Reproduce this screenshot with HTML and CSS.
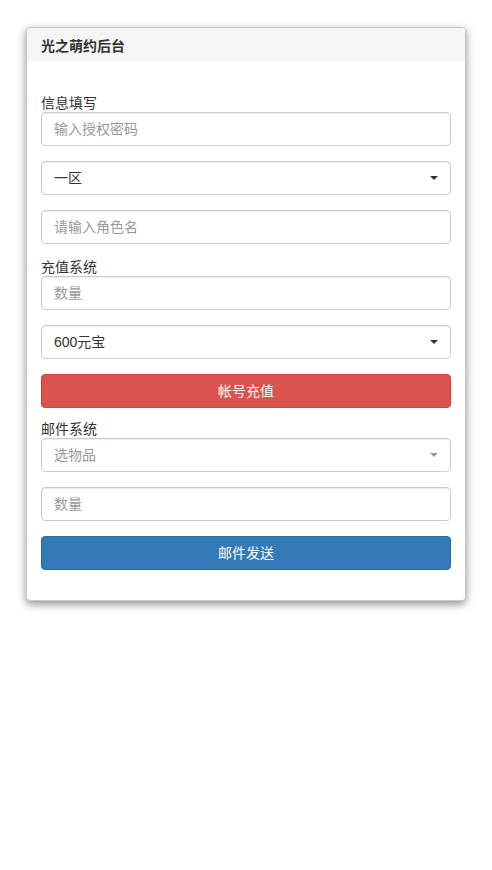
FILE: index.html
```html
<!DOCTYPE html>
<html lang="zh-CN">
<head>
<meta charset="utf-8">
<title>光之萌约后台</title>
<link rel="stylesheet" href="styles.css">
</head>
<body>
<div class="page">
  <div class="card">
    <div class="card-header">光之萌约后台</div>
    <div class="card-body">
      <label class="label">信息填写</label>
      <input class="control" type="text" placeholder="输入授权密码">
      <div class="select-wrap">
        <select class="control select">
          <option>一区</option>
        </select>
      </div>
      <input class="control" type="text" placeholder="请输入角色名">

      <label class="label">充值系统</label>
      <input class="control" type="text" placeholder="数量">
      <div class="select-wrap">
        <select class="control select">
          <option>600元宝</option>
        </select>
      </div>
      <button class="btn btn-danger" type="button">帐号充值</button>

      <label class="label">邮件系统</label>
      <div class="select-wrap muted">
        <select class="control select placeholder">
          <option>选物品</option>
        </select>
      </div>
      <input class="control" type="text" placeholder="数量">
      <button class="btn btn-primary last" type="button">邮件发送</button>
    </div>
  </div>
</div>
</body>
</html>
```
FILE: styles.css
```css
* { box-sizing: border-box; }
html, body {
  margin: 0;
  padding: 0;
  background: #fff;
}
body {
  font-family: "Liberation Sans", "Noto Sans CJK SC", sans-serif;
  font-size: 14px;
  color: #333;
}
.page {
  padding: 27px 26px;
}
.card {
  background: #fff;
  border: 1px solid #c8c8c8;
  border-radius: 4px;
  box-shadow: 0 3px 8px rgba(0, 0, 0, 0.45);
  overflow: hidden;
}
.card-header {
  height: 34px;
  display: flex;
  align-items: center;
  padding: 0 14px;
  background: #f5f5f5;
  font-weight: bold;
  font-size: 14px;
  color: #333;
}
.card-body {
  padding: 33px 14px 15px;
  display: flex;
  flex-direction: column;
}
.label {
  display: block;
  font-size: 14px;
  line-height: 17px;
  color: #333;
}
.control {
  display: block;
  width: 100%;
  height: 34px;
  margin: 0 0 15px;
  padding: 6px 12px;
  font-family: inherit;
  font-size: 14px;
  line-height: 20px;
  color: #333;
  background: #fff;
  border: 1px solid #ccc;
  border-radius: 4px;
  box-shadow: inset 0 1px 1px rgba(0, 0, 0, 0.075);
  outline: none;
}
.control::placeholder {
  color: #999;
}
.select-wrap {
  position: relative;
}
.select {
  -webkit-appearance: none;
  appearance: none;
}
.select.placeholder {
  color: #999;
}
.select-wrap::after {
  content: "";
  position: absolute;
  right: 13px;
  top: 15px;
  width: 0;
  height: 0;
  border-left: 4px solid transparent;
  border-right: 4px solid transparent;
  border-top: 4px solid #333;
  pointer-events: none;
}
.select-wrap.muted::after {
  border-top-color: #999;
}
.btn {
  display: block;
  width: 100%;
  height: 34px;
  margin: 0 0 13px;
  padding: 6px 12px;
  font-family: inherit;
  font-size: 14px;
  line-height: 20px;
  color: #fff;
  border: 1px solid transparent;
  border-radius: 4px;
  text-align: center;
}
.btn-danger {
  background: #d9534f;
  border-color: #d43f3a;
}
.btn-primary {
  background: #337ab7;
  border-color: #2e6da4;
}
.btn.last {
  margin-bottom: 15px;
}
```
